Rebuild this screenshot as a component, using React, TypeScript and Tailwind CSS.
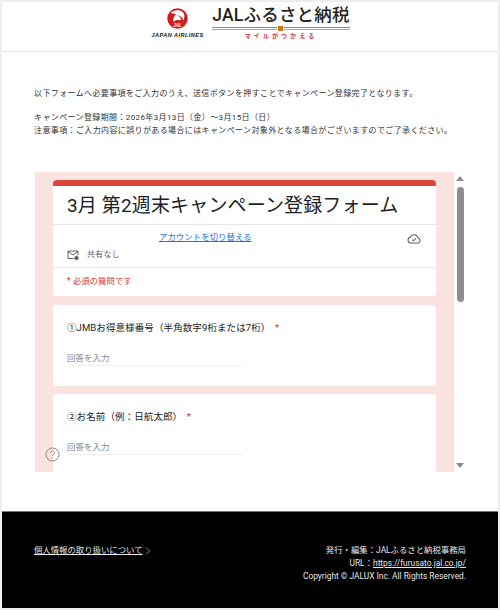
import React from "react";

const jp = "font-['Roboto','Noto_Sans_CJK_JP',sans-serif]";

function Crane() {
  return (
    <svg width="27" height="27" viewBox="0 0 27 27" aria-hidden="true">
      <circle cx="13.5" cy="13.5" r="10.2" fill="#cf1f1c" />
      <path d="M6.5 8.2 C9.5 5 15.5 4.4 18.6 7 C20.8 9 21 12 19.4 15.6 C18.8 12.6 16.6 10.4 13.4 10.2 C15.8 11.4 17.2 13.4 17 15.6 C14.8 14 11.6 14.6 9.6 17 C9 14 9.8 11 12 9.2 C10.4 8.4 8.4 8 6.5 8.2 Z" fill="#fff" />
      <text x="13.5" y="22" textAnchor="middle" fontSize="4.5" fontWeight="700" fontStyle="italic" fill="#fff" fontFamily="Liberation Sans, sans-serif">JAL</text>
    </svg>
  );
}

function Question({ title, top }: { title: string; top: string }) {
  return (
    <section className={`bg-white rounded-[4px] mx-[18px] pl-[14px] pr-[24px] ${top} h-[81px] pt-[15px] shrink-0`}>
      <div className="text-[9.5px] leading-[15px] text-[#202124] tracking-[0.1px]">
        {title} <span className="text-[#d93025] ml-[2px]">*</span>
      </div>
      <div className="mt-[12px] w-[176px] h-[19px] pt-[4px] border-b border-[#eeeeee] text-[8.5px] leading-[14px] text-[#80868b]">回答を入力</div>
    </section>
  );
}

export default function App() {
  return (
    <div className={`w-[500px] h-[610px] bg-[#eeeeee] p-[2px] overflow-hidden ${jp}`}>
      <div className="relative h-[606px] bg-white flex flex-col">
        <header className="h-[50px] shrink-0 border-b border-[#e4e4e4] flex justify-center items-start gap-[8px] pl-[1px]">
          <div className="w-[53px] flex flex-col items-center pt-[3px]">
            <Crane />
            <div className="font-['Liberation_Sans',sans-serif] italic font-bold text-[5.5px] leading-[5px] tracking-[0.5px] text-[#111] whitespace-nowrap mt-[1px]">JAPAN AIRLINES</div>
          </div>
          <div className="w-[138px] flex flex-col items-center pt-[3px]">
            <div className="text-[17.5px] leading-[21px] font-medium text-[#222] whitespace-nowrap tracking-[0.2px]">JALふるさと納税</div>
            <div className="w-full relative h-[3px] mt-[1px] mb-[1px] flex flex-col justify-between">
              <div className="h-[1px] bg-[#d9762c]" />
              <div className="h-[1px] bg-[#d9a03c]" />
              <div className="absolute left-[65px] -top-[2px] w-[7px] h-[7px] bg-[#c9781f] border border-white" />
            </div>
            <div className="text-[6px] leading-[9px] font-bold text-[#d3333a] tracking-[3.1px] whitespace-nowrap">マイルがつかえる</div>
          </div>
        </header>

        <div className="flex-1 min-h-0 px-[32px] pt-[35px] text-[8px] leading-[13px] text-[#333] tracking-[0.38px]">
          <p className="whitespace-nowrap">以下フォームへ必要事項をご入力のうえ、送信ボタンを押すことでキャンペーン登録完了となります。</p>
          <p className="mt-[11px] whitespace-nowrap">キャンペーン登録期間：2026年3月13日（金）～3月15日（日）</p>
          <p className="whitespace-nowrap">注意事項：ご入力内容に誤りがある場合にはキャンペーン対象外となる場合がございますのでご了承ください。</p>

          <div className="mt-[35px] ml-[1px] w-[432px] h-[300px] flex overflow-hidden tracking-normal">
            <div className="relative w-[419px] bg-[#fae3e1] flex flex-col pt-[8px] overflow-hidden">
              <section className="mx-[18px] h-[116px] bg-white rounded-[4px] overflow-hidden shrink-0">
                <div className="h-[6px] bg-[#db4437]" />
                <h1 className="h-[39px] pl-[14px] text-[19px] leading-[40px] text-[#202124] border-b border-[#e8e8e8] tracking-[0.15px] font-normal whitespace-nowrap">3月 第2週末キャンペーン登録フォーム</h1>
                <div className="relative h-[43px] border-b border-[#e8e8e8]">
                  <a className="absolute left-[106px] top-[6px] text-[8.45px] leading-[13px] text-[#1a73e8] underline whitespace-nowrap">アカウントを切り替える</a>
                  <svg className="absolute right-[15px] top-[7px]" width="14" height="14" viewBox="0 0 24 24" fill="none" stroke="#5f6368" strokeWidth="1.8" aria-hidden="true">
                    <path d="M6 19h12a4.5 4.5 0 0 0 .8-8.9A7 7 0 0 0 5.5 9.2 5 5 0 0 0 6 19z" />
                    <path d="M9 13l2.2 2.2L15.5 11" />
                  </svg>
                  <div className="absolute left-[14px] top-[24px] flex items-center gap-[8px]">
                    <svg width="12" height="12" viewBox="0 0 24 24" fill="none" stroke="#5f6368" strokeWidth="2" aria-hidden="true">
                      <path d="M13 19H2V4h20v8" />
                      <path d="M2 5l10 7 10-7" />
                      <circle cx="19" cy="18" r="3.5" fill="#5f6368" />
                    </svg>
                    <span className="text-[8px] leading-[12px] text-[#5f6368] tracking-[0.25px]">共有なし</span>
                  </div>
                </div>
                <div className="pl-[14px] pt-[7px] text-[8.2px] leading-[12px] text-[#d93025] tracking-[0.2px] whitespace-nowrap">* 必須の質問です</div>
              </section>
              <Question title="①JMBお得意様番号（半角数字9桁または7桁）" top="mt-[9px]" />
              <Question title="②お名前（例：日航太郎）" top="mt-[8px]" />
              <svg className="absolute left-[10px] top-[275px]" width="15" height="15" viewBox="0 0 24 24" fill="none" stroke="#8a8a8a" strokeWidth="1.6" aria-hidden="true">
                <circle cx="12" cy="12" r="10.5" />
                <path d="M9 9.5a3 3 0 1 1 4.6 2.5c-1 .7-1.6 1.3-1.6 2.6" />
                <path d="M12 17.2v1.3" />
              </svg>
            </div>
            <div className="w-[12px] bg-[#fdfdfd] flex flex-col items-center">
              <div className="mt-[4px] w-0 h-0 border-l-[4px] border-r-[4px] border-b-[5px] border-l-transparent border-r-transparent border-b-[#8a8a8a]" />
              <div className="mt-[6px] w-[7px] h-[115px] rounded-full bg-[#8e8e8e]" />
              <div className="mt-auto mb-[4px] w-0 h-0 border-l-[4px] border-r-[4px] border-t-[5px] border-l-transparent border-r-transparent border-t-[#8a8a8a]" />
            </div>
          </div>
        </div>

        <footer className="h-[97px] shrink-0 bg-black border-t border-[#777] flex justify-between items-start px-[32px] pt-[32px] text-[#e6e6e6] text-[8.4px] leading-[13px]">
          <div className="flex items-center gap-[2px]">
            <a className="underline whitespace-nowrap">個人情報の取り扱いについて</a>
            <svg width="5" height="8" viewBox="0 0 5 8" fill="none" stroke="#aaa" strokeWidth="0.8" aria-hidden="true"><path d="M1 0.5 L4.5 4 L1 7.5" /></svg>
          </div>
          <div className="text-right whitespace-nowrap">
            <div>発行・編集：JALふるさと納税事務局</div>
            <div>URL：<a className="underline">https://furusato.jal.co.jp/</a></div>
            <div>Copyright © JALUX Inc. All Rights Reserved.</div>
          </div>
        </footer>
      </div>
    </div>
  );
}
